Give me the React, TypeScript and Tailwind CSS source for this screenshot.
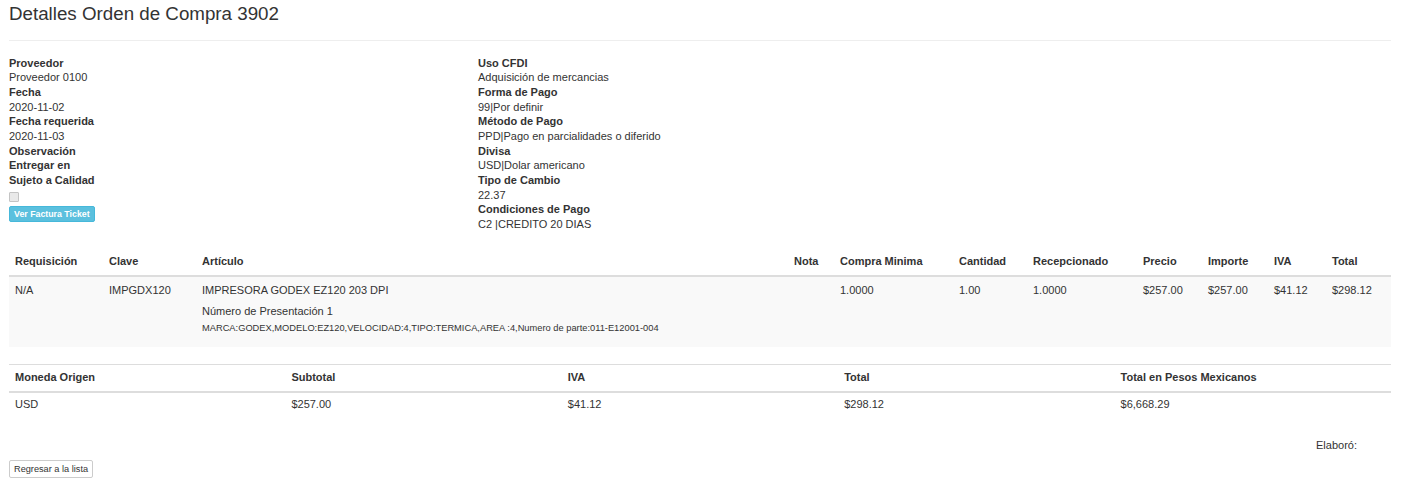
const info = {
  left: [
    ['Proveedor', 'Proveedor 0100'],
    ['Fecha', '2020-11-02'],
    ['Fecha requerida', '2020-11-03'],
    ['Observación', null],
    ['Entregar en', null],
    ['Sujeto a Calidad', null],
  ] as [string, string | null][],
  right: [
    ['Uso CFDI', 'Adquisición de mercancias'],
    ['Forma de Pago', '99|Por definir'],
    ['Método de Pago', 'PPD|Pago en parcialidades o diferido'],
    ['Divisa', 'USD|Dolar americano'],
    ['Tipo de Cambio', '22.37'],
    ['Condiciones de Pago', 'C2 |CREDITO 20 DIAS'],
  ] as [string, string | null][],
}

const columns: [string, number][] = [
  ['Requisición', 94],
  ['Clave', 93],
  ['Artículo', 592],
  ['Nota', 46],
  ['Compra Minima', 119],
  ['Cantidad', 74],
  ['Recepcionado', 110],
  ['Precio', 65],
  ['Importe', 66],
  ['IVA', 58],
  ['Total', 65],
]

function Field({ label, value }: { label: string; value: string | null }) {
  return (
    <>
      <div className="font-bold">{label}</div>
      {value !== null && <div>{value}</div>}
    </>
  )
}

export default function App() {
  return (
    <div
      className="min-h-[484px] bg-white pr-[18px] pl-[9px] text-[11px] leading-[14.66px] text-[#333]"
      style={{ fontFamily: '"Liberation Sans", Arial, sans-serif' }}
    >
      <h3 className="pt-[4px] text-[18.75px] leading-[20.6px] font-normal">
        Detalles Orden de Compra 3902
      </h3>
      <hr className="mt-[15px] mb-[15px] border-t border-[#eee]" />

      {/* Cabecera */}
      <div className="grid grid-cols-[469px_1fr]">
        <div>
          {info.left.map(([l, v]) => (
            <Field key={l} label={l} value={v} />
          ))}
          <div className="mt-[4px] h-[10px] w-[10px] rounded-[1px] border border-[#c4c4c4] bg-[#e9e9e9]" />
          <button className="mt-[4px] block h-[16px] rounded-[2px] border border-[#46b8da] bg-[#5bc0de] px-[4px] text-[8.8px] leading-[14px] font-bold text-white">
            Ver Factura Ticket
          </button>
        </div>
        <div>
          {info.right.map(([l, v]) => (
            <Field key={l} label={l} value={v} />
          ))}
        </div>
      </div>

      {/* Partidas */}
      <table className="mt-[17px] w-full table-fixed border-collapse">
        <colgroup>
          {columns.map(([c, w]) => (
            <col key={c} style={{ width: w }} />
          ))}
        </colgroup>
        <thead>
          <tr>
            {columns.map(([c]) => (
              <th
                key={c}
                className="border-b-2 border-[#ddd] p-[6px] text-left font-bold"
              >
                {c}
              </th>
            ))}
          </tr>
        </thead>
        <tbody>
          <tr className="bg-[#f9f9f9] align-top">
            <td className="p-[6px]">N/A</td>
            <td className="p-[6px]">IMPGDX120</td>
            <td className="px-[6px] pt-[6px] pb-[13px]">
              <div>IMPRESORA GODEX EZ120 203 DPI</div>
              <div className="mt-[6px]">Número de Presentación 1</div>
              <div className="mt-[4px] text-[9.3px] leading-[12px] whitespace-nowrap">
                MARCA:GODEX,MODELO:EZ120,VELOCIDAD:4,TIPO:TERMICA,AREA
                :4,Numero de parte:011-E12001-004
              </div>
            </td>
            <td className="p-[6px]"></td>
            <td className="p-[6px]">1.0000</td>
            <td className="p-[6px]">1.00</td>
            <td className="p-[6px]">1.0000</td>
            <td className="p-[6px]">$257.00</td>
            <td className="p-[6px]">$257.00</td>
            <td className="p-[6px]">$41.12</td>
            <td className="p-[6px]">$298.12</td>
          </tr>
        </tbody>
      </table>

      {/* Totales */}
      <table className="mt-[17px] w-full table-fixed border-collapse">
        <thead>
          <tr>
            {['Moneda Origen', 'Subtotal', 'IVA', 'Total', 'Total en Pesos Mexicanos'].map(
              (c) => (
                <th
                  key={c}
                  className="border-t border-b-2 border-t-[#ddd] border-b-[#ddd] px-[6px] pt-[5px] pb-[6px] text-left font-bold"
                >
                  {c}
                </th>
              ),
            )}
          </tr>
        </thead>
        <tbody>
          <tr>
            <td className="px-[6px] pt-[4px] pb-[6px]">USD</td>
            <td className="px-[6px] pt-[4px] pb-[6px]">$257.00</td>
            <td className="px-[6px] pt-[4px] pb-[6px]">$41.12</td>
            <td className="px-[6px] pt-[4px] pb-[6px]">$298.12</td>
            <td className="px-[6px] pt-[4px] pb-[6px]">$6,668.29</td>
          </tr>
        </tbody>
      </table>

      <div className="mt-[20px] flex justify-end pr-[34px]">Elaboró:</div>

      <button className="mt-[8px] block h-[18px] rounded-[2px] border border-[#ccc] bg-white px-[4px] text-[9.2px] leading-[16px] text-[#333]">
        Regresar a la lista
      </button>
    </div>
  )
}
